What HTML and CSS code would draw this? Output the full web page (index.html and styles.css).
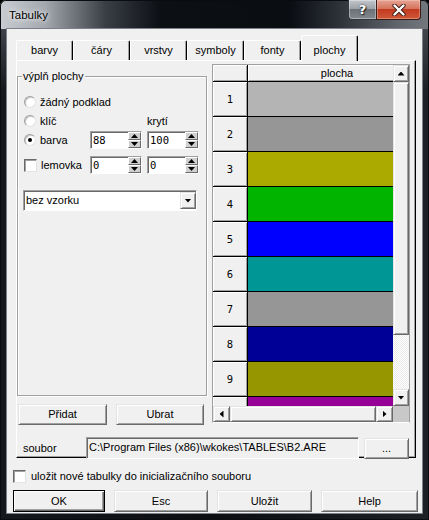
FILE: index.html
```html
<!DOCTYPE html>
<html>
<head>
<meta charset="utf-8">
<title>Tabulky</title>
<link rel="stylesheet" href="styles.css">
</head>
<body>
<div class="window">
  <div class="titlebar">
    <span class="title">Tabulky</span>
    <div class="caption">
      <div class="cap-btn cap-help"><span class="qmark">?</span></div>
      <div class="cap-btn cap-close">
        <svg width="14" height="12" viewBox="0 0 14 12"><path d="M2.5 1.5 L11.5 10.5 M11.5 1.5 L2.5 10.5" stroke="#3a1a14" stroke-width="4.2" stroke-linecap="round"/><path d="M2.5 1.5 L11.5 10.5 M11.5 1.5 L2.5 10.5" stroke="#fff" stroke-width="2.4" stroke-linecap="round"/></svg>
      </div>
    </div>
  </div>
  <div class="client">
    <div class="tabs">
      <div class="tab">barvy</div>
      <div class="tab">čáry</div>
      <div class="tab">vrstvy</div>
      <div class="tab">symboly</div>
      <div class="tab">fonty</div>
      <div class="tab active">plochy</div>
    </div>
    <div class="panel">
      <div class="panel-top">
        <div class="left-col">
          <div class="group">
            <span class="legend">výplň plochy</span>
            <div class="opt-row first">
              <div class="opt wide"><span class="radio"></span>žádný podklad</div>
            </div>
            <div class="opt-row">
              <div class="opt"><span class="radio"></span>klíč</div>
              <div></div>
              <div class="lbl">krytí</div>
            </div>
            <div class="opt-row">
              <div class="opt"><span class="radio checked"></span>barva</div>
              <div class="spin"><span class="spin-val">88</span><span class="spin-btns"><span><i class="tri-up"></i></span><span><i class="tri-down"></i></span></span></div>
              <div class="spin"><span class="spin-val">100</span><span class="spin-btns"><span><i class="tri-up"></i></span><span><i class="tri-down"></i></span></span></div>
            </div>
            <div class="opt-row last">
              <div class="opt"><span class="check"></span>lemovka</div>
              <div class="spin"><span class="spin-val">0</span><span class="spin-btns"><span><i class="tri-up"></i></span><span><i class="tri-down"></i></span></span></div>
              <div class="spin"><span class="spin-val">0</span><span class="spin-btns"><span><i class="tri-up"></i></span><span><i class="tri-down"></i></span></span></div>
            </div>
            <div class="combo">
              <span class="combo-text">bez vzorku</span>
              <span class="combo-btn"><i class="tri-down"></i></span>
            </div>
          </div>
          <div class="pair-btns">
            <div class="btn b-add">Přidat</div>
            <div class="btn b-rem">Ubrat</div>
          </div>
        </div>
        <div class="sgrid">
          <div class="table">
            <div class="hcell"></div><div class="hcell col">plocha</div>
            <div class="rh">1</div><div class="cell c1"></div>
            <div class="rh">2</div><div class="cell c2"></div>
            <div class="rh">3</div><div class="cell c3"></div>
            <div class="rh">4</div><div class="cell c4"></div>
            <div class="rh">5</div><div class="cell c5"></div>
            <div class="rh">6</div><div class="cell c6"></div>
            <div class="rh">7</div><div class="cell c7"></div>
            <div class="rh">8</div><div class="cell c8"></div>
            <div class="rh">9</div><div class="cell c9"></div>
            <div class="rh"></div><div class="cell c10"></div>
          </div>
          <div class="vscroll">
            <div class="sb-btn v"><i class="tri-up"></i></div>
            <div class="sb-thumb vthumb"></div>
            <div class="sb-track"></div>
            <div class="sb-btn v"><i class="tri-down"></i></div>
          </div>
          <div class="hscroll">
            <div class="sb-btn h"><i class="tri-left"></i></div>
            <div class="sb-thumb hthumb"></div>
            <div class="sb-track"></div>
            <div class="sb-btn h"><i class="tri-right"></i></div>
          </div>
          <div class="corner"></div>
        </div>
      </div>
      <div class="file-row">
        <span class="file-label">soubor</span>
        <span class="file-field">C:\Program Files (x86)\wkokes\TABLES\B2.ARE</span>
        <div class="btn file-btn">...</div>
      </div>
    </div>
    <div class="save-row"><span class="check"></span>uložit nové tabulky do inicializačního souboru</div>
    <div class="bottom-btns">
      <div class="btn default">OK</div>
      <div class="btn">Esc</div>
      <div class="btn">Uložit</div>
      <div class="btn">Help</div>
    </div>
  </div>
</div>
</body>
</html>
```
FILE: styles.css
```css
* { box-sizing: border-box; }
html, body { margin: 0; padding: 0; }
body {
  width: 429px; height: 520px; overflow: hidden;
  font-family: "Liberation Sans", Arial, sans-serif;
  font-size: 11px; color: #000; background: #000;
}
i { display: block; }

.window {
  width: 429px; height: 520px;
  padding: 0 7px 7px;
  display: flex; flex-direction: column;
  border-radius: 6px 6px 0 0;
  background:
    linear-gradient(90deg, #c9cdd2 0px, #a3a8ae 45px, #3a3f46 105px, #0c0f14 160px, #0a0d12 290px, #2a2f36 335px, #62676e 400px, #73787f 429px) 0 0 / 100% 29px no-repeat,
    linear-gradient(180deg, rgba(90,95,102,0.6) 29px, rgba(20,24,30,0) 90px),
    linear-gradient(90deg, #15181d, #0b0d11 50%, #1d2126);
  box-shadow: inset 0 0 0 1px #0a0c10;
}

.titlebar { height: 29px; display: flex; align-items: flex-start; padding-left: 2px; }
.title {
  margin-top: 8px; font-size: 11.5px; line-height: 14px; color: #000;
  text-shadow: 0 0 4px #fff, 0 0 8px rgba(255,255,255,0.8);
}
.caption { margin-left: auto; margin-right: 1px; display: flex; }
.cap-btn { height: 20px; display: flex; align-items: center; justify-content: center; }
.cap-help {
  width: 28px;
  border: 1px solid #33373d; border-top: none; border-right: none;
  border-radius: 0 0 0 4px;
  background: linear-gradient(180deg, #c3c7cc 0%, #9ea3a9 45%, #6d7279 50%, #83888f 100%);
  box-shadow: inset 0 0 0 1px rgba(255,255,255,0.35);
}
.qmark {
  color: #fff; font-family: "DejaVu Sans", sans-serif; font-weight: bold; font-size: 13px; line-height: 14px;
  text-shadow: 0 0 2px #202428, 1px 1px 1px #202428;
}
.cap-close {
  width: 45px;
  border: 1px solid #3a1d18; border-top: none;
  border-radius: 0 0 4px 0;
  background: linear-gradient(180deg, #e6a596 0%, #d6735d 45%, #c23a20 50%, #cf5839 100%);
  box-shadow: inset 0 0 0 1px rgba(255,220,210,0.35);
}

.client {
  flex: 1;
  background: #f0f0f0;
  display: flex; flex-direction: column;
  box-shadow: 0 0 0 1px #7c8188;
}

.tabs {
  display: flex; align-items: flex-end;
  height: 25px; margin-top: 6px; padding-left: 9px;
  position: relative; z-index: 1;
}
.tab {
  width: 57px; height: 20px;
  display: flex; align-items: center; justify-content: center;
  border-top: 1px solid #fff; border-left: 1px solid #fff; border-right: 1px solid #000;
  box-shadow: inset -1px 0 #a0a0a0;
  border-radius: 2px 2px 0 0;
  line-height: 13px;
}
.tab.active {
  height: 26px; margin-bottom: -1px;
  background: #f0f0f0;
  padding-top: 4px;
}

.panel {
  width: 400px; height: 398px; margin-left: 9px;
  border: 1px solid; border-color: #fff #000 #000 #fff;
  box-shadow: inset -1px -1px #a0a0a0;
  display: flex; flex-direction: column;
}
.panel-top { display: flex; align-items: flex-start; padding-top: 3px; }
.left-col { width: 190px; margin-top: 12px; }

.group {
  height: 320px;
  border: 1px solid #a0a0a0;
  box-shadow: inset 1px 1px #fff, 1px 1px #fff;
  padding-left: 6px;
}
.legend {
  display: table; margin: -7px 0 0 -2px; padding: 0 1px;
  background: #f0f0f0; line-height: 13px;
}
.opt-row {
  display: grid; grid-template-columns: 61px 52px 52px; column-gap: 5px;
  height: 18px; align-items: center; margin-top: 1px;
}
.opt-row.first { margin-top: 10px; }
.opt-row.last { margin-top: 7px; }
.opt { display: flex; align-items: center; gap: 4px; white-space: nowrap; line-height: 13px; }
.opt.wide { grid-column: 1 / -1; }
.lbl { line-height: 13px; }

.radio {
  width: 12px; height: 12px; border-radius: 50%; flex: none;
  background: #fff;
  border: 1px solid; border-color: #a0a0a0 #e3e3e3 #e3e3e3 #a0a0a0;
  box-shadow: inset 1px 1px 0 #c8c8c8;
  display: flex; align-items: center; justify-content: center;
}
.radio.checked::after {
  content: ""; width: 4px; height: 4px; border-radius: 50%; background: #000;
}
.check {
  width: 13px; height: 13px; background: #fff;
  border: 1px solid; border-color: #696969 #e3e3e3 #e3e3e3 #696969;
  box-shadow: inset 1px 1px #a0a0a0;
  flex: none;
}

.spin {
  display: flex; height: 18px;
  border: 1px solid; border-color: #a0a0a0 #fff #fff #a0a0a0;
  box-shadow: inset 1px 1px #696969;
  background: #fff;
}
.spin-val {
  flex: 1; padding: 2px 0 0 2px;
  font-family: "DejaVu Sans Mono", "Liberation Mono", monospace; font-size: 10.5px; line-height: 13px;
}
.spin-btns { width: 13px; display: flex; flex-direction: column; }
.spin-btns span {
  flex: 1; background: #d0d0d0;
  display: flex; align-items: center; justify-content: center;
  border: 1px solid; border-color: #fff #696969 #696969 #fff;
}

.tri-up { width: 7px; height: 4px; background: #000; clip-path: polygon(50% 0, 100% 100%, 0 100%); }
.tri-down { width: 7px; height: 4px; background: #000; clip-path: polygon(0 0, 100% 0, 50% 100%); }
.tri-left { width: 4px; height: 7px; background: #000; clip-path: polygon(100% 0, 100% 100%, 0 50%); }
.tri-right { width: 4px; height: 7px; background: #000; clip-path: polygon(0 0, 100% 50%, 0 100%); }

.combo {
  margin: 16px 0 0 -1px; width: 174px; height: 21px;
  border: 1px solid; border-color: #a0a0a0 #fff #fff #a0a0a0;
  box-shadow: inset 1px 1px #696969;
  background: #fff;
  display: flex; align-items: center;
}
.combo-text { padding-left: 2px; line-height: 13px; }
.combo-btn {
  margin-left: auto; width: 16px; height: 17px;
  background: #f0f0f0;
  border: 1px solid; border-color: #e3e3e3 #696969 #696969 #e3e3e3;
  box-shadow: inset 1px 1px #fff, inset -1px -1px #a0a0a0;
  display: flex; align-items: center; justify-content: center;
}

.btn {
  height: 21px;
  background: #f0f0f0;
  border: 1px solid; border-color: #e3e3e3 #696969 #696969 #e3e3e3;
  box-shadow: inset 1px 1px #fff, inset -1px -1px #a0a0a0;
  display: flex; align-items: center; justify-content: center;
  line-height: 13px;
}
.pair-btns { display: flex; gap: 9px; margin-top: 8px; padding-left: 1px; }
.b-add { width: 89px; }
.b-rem { width: 88px; }

.sgrid {
  margin-left: 5px; width: 198px; height: 359px;
  border: 1px solid; border-color: #a0a0a0 #a0a0a0 #fff #a0a0a0;
  display: grid; grid-template-columns: 180px 16px; grid-template-rows: 341px 16px;
}
.table {
  overflow: hidden; width: 180px; height: 341px;
  display: grid; grid-template-columns: 34px 178px;
  grid-template-rows: 16px; grid-auto-rows: 34px;
  gap: 1px; background: #000;
}
.hcell, .rh {
  background: #f0f0f0;
  box-shadow: inset 1px 1px #fff, inset -1px -1px #a0a0a0;
  display: flex; align-items: center; justify-content: center;
  line-height: 13px;
}
.rh { font-family: "DejaVu Sans Mono", "Liberation Mono", monospace; font-size: 10.5px; }
.c1 { background: #b4b4b4; }
.c2 { background: #969696; }
.c3 { background: #aaaa00; }
.c4 { background: #00b400; }
.c5 { background: #0000ff; }
.c6 { background: #009696; }
.c7 { background: #969696; }
.c8 { background: #000096; }
.c9 { background: #969600; }
.c10 { background: #960096; }

.vscroll { display: flex; flex-direction: column; }
.hscroll { display: flex; }
.sb-btn {
  background: #f0f0f0;
  border: 1px solid; border-color: #e3e3e3 #696969 #696969 #e3e3e3;
  box-shadow: inset 1px 1px #fff, inset -1px -1px #a0a0a0;
  display: flex; align-items: center; justify-content: center;
  flex: none;
}
.sb-btn.v { height: 17px; }
.sb-btn.h { width: 17px; }
.sb-thumb {
  background: #f0f0f0;
  border: 1px solid; border-color: #e3e3e3 #696969 #696969 #e3e3e3;
  box-shadow: inset 1px 1px #fff, inset -1px -1px #a0a0a0;
  flex: none;
}
.vthumb { height: 253px; }
.hthumb { width: 146px; }
.sb-track {
  flex: 1;
  background: repeating-conic-gradient(#ffffff 0 25%, #ebebeb 0 50%) 0 0 / 2px 2px;
}
.corner { background: #c8c8c8; }

.file-row {
  display: flex; align-items: center;
  margin-top: 12px; height: 22px; padding-left: 6px;
}
.file-label { width: 63px; line-height: 13px; }
.file-field {
  width: 273px; height: 22px;
  border: 1px solid; border-color: #a0a0a0 #fff #fff #a0a0a0;
  box-shadow: inset 1px 1px #696969;
  background: #f0f0f0;
  padding: 3px 0 0 2px; line-height: 13px; white-space: nowrap;
}
.file-btn { width: 45px; height: 21px; margin-left: 5px; }

.save-row {
  display: flex; align-items: center; gap: 5px;
  margin-top: 12px; height: 13px; padding-left: 6px;
  line-height: 13px;
}

.bottom-btns {
  display: grid; grid-template-columns: 92px 94px 95px 97px; column-gap: 9px;
  margin-top: 7px; padding-left: 6px;
}
.bottom-btns .btn { height: 22px; }
.btn.default {
  border: 1px solid #000;
  box-shadow: inset 1px 1px #fff, inset -1px -1px #696969, inset -2px -2px #a0a0a0;
}
```
